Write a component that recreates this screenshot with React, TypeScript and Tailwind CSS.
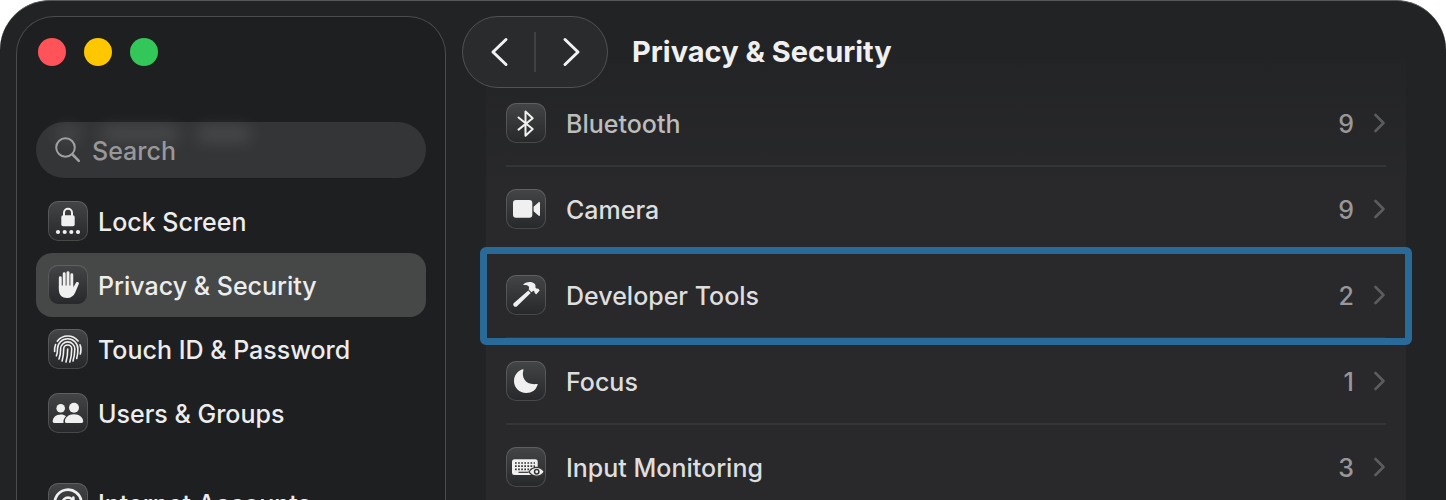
import { useState, type ReactNode } from "react";
import { AtSign } from "lucide-react";

interface SidebarItem {
  id: string;
  label: string;
  icon: ReactNode;
}

interface PermissionItem extends SidebarItem {
  count: number;
}

function Glyph({ children }: { children: ReactNode }) {
  return (
    <svg viewBox="0 0 40 40" className="size-10" fill="currentColor" aria-hidden="true">
      {children}
    </svg>
  );
}

const LockGlyph = (
  <Glyph>
    <path d="M16 15v-3.2a4 4 0 0 1 8 0V15" fill="none" stroke="currentColor" strokeWidth="2" />
    <rect x="13.3" y="14.2" width="13.4" height="11" rx="1.8" />
    <circle cx="10" cy="31" r="2.1" />
    <circle cx="16.7" cy="31" r="2.1" />
    <circle cx="23.3" cy="31" r="2.1" />
    <circle cx="30" cy="31" r="2.1" />
  </Glyph>
);

const HandGlyph = (
  <Glyph>
    <path
      d="M12.3 12.8V24M16.2 8.8V22M20 7.6V22M23.8 9.8V22"
      fill="none"
      stroke="currentColor"
      strokeWidth="2.9"
      strokeLinecap="round"
    />
    <path d="M10.9 20.5V25c0 5 3.4 8 8.1 8 4 0 6.5-1.9 8.2-5.5l3.6-8.4c.4-1.1-.2-1.9-1.1-2.1-1-.1-1.7.4-2.1 1.3l-2.3 4.2v-2z" />
  </Glyph>
);

const FingerprintGlyph = (
  <Glyph>
    <g fill="none" stroke="currentColor" strokeWidth="1.6" strokeLinecap="round">
      <path d="M9.3 12.2a13.2 13.2 0 0 1 20.8-.2" />
      <path d="M32 15.8c1.2 2.8 1.2 6.2.3 9.2M6.6 22.5c-.1-2.8.2-5 1-7" />
      <path d="M8.4 26.8c.8-2 1.1-4.3 1.1-6.8a10.2 10.2 0 0 1 20.4 0c0 3.5-.3 6.5-1.2 9.5" />
      <path d="M11 30c1.2-3 1.6-6.5 1.6-10a7.1 7.1 0 0 1 14.2 0c0 4.5-.6 8.3-1.8 12" />
      <path d="M14.1 32c1.2-4 1.6-8 1.6-12a4 4 0 0 1 8 0c0 5-.6 9-1.9 13" />
      <path d="M19.7 20c0 5-.5 9-1.7 13" />
    </g>
  </Glyph>
);

const UsersGlyph = (
  <Glyph>
    <circle cx="12.7" cy="15.3" r="4.3" />
    <circle cx="26" cy="14.8" r="5" />
    <path d="M4.7 28.6c0-3.7 3-7 8-7 2.3 0 4 .6 5.3 1.7-1.7 1.7-2.6 3.6-2.6 5.5 0 .5.1.9.3 1.2H6.2c-1 0-1.5-.5-1.5-1.4z" />
    <path d="M16.9 28.6c0-3.9 3.5-7.3 9.1-7.3s9.2 3.4 9.2 7.3c0 .9-.6 1.4-1.7 1.4h-15c-1.1 0-1.6-.5-1.6-1.4z" />
  </Glyph>
);

const BluetoothGlyph = (
  <Glyph>
    <path
      d="M12.5 14.5L26.7 26l-7.2 6.8V8.4l7.2 6.8L12.5 26.6"
      fill="none"
      stroke="currentColor"
      strokeWidth="2"
      strokeLinecap="round"
      strokeLinejoin="round"
    />
  </Glyph>
);

const CameraGlyph = (
  <Glyph>
    <rect x="7" y="11" width="19.3" height="17.8" rx="3" />
    <path d="M27.6 17.8l4.8-4.3c.9-.8 1.6-.5 1.6.6v11.8c0 1.1-.7 1.4-1.6.6l-4.8-4.3z" />
  </Glyph>
);

const HammerGlyph = (
  <Glyph>
    <path d="M22.3 15.4l2.4 2.5L11 31.2c-.8.8-2.1.8-3 0-1-.9-1-2.3-.1-3.1z" />
    <path d="M17.5 9.3C20.4 6.5 25 6.2 28 8.3c1.1.8 1.6 1.8 1.5 3l-.1 1.3 1.4 1.1 1.3-.2 1.3 1.4c.3.3.2.6 0 .9L30.6 19c-.3.3-.6.3-.9 0l-1.1-1.2-.2-1.2-1-.8-2 1.4-2.8-3c1.7-2.3-.7-4.6-4.9-4.2-.4 0-.5-.4-.2-.7z" />
  </Glyph>
);

const MoonGlyph = (
  <Glyph>
    <path d="M16.6 8.3c.6-.2 1 .3.8.9-2.2 6.8 1.9 15.2 13.3 13.8.7-.1 1.2.3.9.9A12.2 12.2 0 0 1 20.2 32C13.3 32 8 26.8 8 20c0-5.4 3.5-9.9 8.6-11.7z" />
  </Glyph>
);

const KeyboardGlyph = (
  <Glyph>
    <rect x="6" y="12.3" width="25.7" height="15.7" rx="2.5" />
    <g fill="none" stroke="#343536" strokeWidth="1.7">
      <path d="M9 16h20M9 19.2h20M9 22.4h20" strokeDasharray="1.7 1.4" />
      <path d="M12.5 25.3h10" strokeWidth="1.2" />
    </g>
    <path
      d="M23 24.8c2-3 4.7-4.4 7.7-4.4s5.7 1.4 7.5 4.4c-1.8 3-4.5 4.4-7.5 4.4s-5.7-1.4-7.7-4.4z"
      stroke="#343536"
      strokeWidth="1.2"
    />
    <circle cx="30.7" cy="24.8" r="2.2" fill="none" stroke="#343536" strokeWidth="1.5" />
  </Glyph>
);

const SIDEBAR_ITEMS: SidebarItem[] = [
  { id: "lock", label: "Lock Screen", icon: LockGlyph },
  { id: "privacy", label: "Privacy & Security", icon: HandGlyph },
  { id: "touch", label: "Touch ID & Password", icon: FingerprintGlyph },
  { id: "users", label: "Users & Groups", icon: UsersGlyph },
];

const ACCOUNT_ITEMS: SidebarItem[] = [
  { id: "internet", label: "Internet Accounts", icon: <AtSign className="size-8" /> },
];

const PERMISSIONS: PermissionItem[] = [
  { id: "bluetooth", label: "Bluetooth", count: 9, icon: BluetoothGlyph },
  { id: "camera", label: "Camera", count: 9, icon: CameraGlyph },
  { id: "devtools", label: "Developer Tools", count: 2, icon: HammerGlyph },
  { id: "focus", label: "Focus", count: 1, icon: MoonGlyph },
  { id: "input", label: "Input Monitoring", count: 3, icon: KeyboardGlyph },
];

function IconTile({ children }: { children: ReactNode }) {
  return (
    <span className="flex size-10 shrink-0 items-center justify-center rounded-[10px] bg-linear-to-b from-[#444546] to-[#272829] text-[#f0f0f0] inset-ring inset-ring-white/15">
      {children}
    </span>
  );
}

interface SidebarRowProps {
  item: SidebarItem;
  selected: boolean;
  onSelect: () => void;
}

function SidebarRow({ item, selected, onSelect }: SidebarRowProps) {
  return (
    <li>
      <button
        onClick={onSelect}
        aria-current={selected ? "page" : undefined}
        className={`flex h-16 w-full items-center gap-2.5 rounded-2xl px-3 text-left text-[25px] font-medium whitespace-nowrap text-[#ededed] ${
          selected ? "bg-[#464847]" : ""
        }`}
      >
        <IconTile>{item.icon}</IconTile>
        <span className="pt-[3px]">{item.label}</span>
      </button>
    </li>
  );
}

function PermissionRow({ item, highlighted, faded }: { item: PermissionItem; highlighted: boolean; faded: boolean }) {
  return (
    <li className="relative px-5">
      <button
        className={`flex h-[86px] w-full items-center gap-5 border-b-2 border-[#343536] text-left text-[25px] font-medium ${
          faded ? "text-[#bdbdbd]" : "text-[#dededf]"
        }`}
      >
        <IconTile>{item.icon}</IconTile>
        <span className="flex-1 pt-[3px]">{item.label}</span>
        <span className="pt-[3px] text-[#98989a]">{item.count}</span>
        <svg viewBox="0 0 12 20" className="h-5 w-3 text-[#5c5c5e]" fill="none" stroke="currentColor" aria-hidden="true">
          <path d="M1.5 2l8 8-8 8" strokeWidth="2.6" strokeLinecap="round" strokeLinejoin="round" />
        </svg>
      </button>
      {highlighted && (
        <span className="pointer-events-none absolute -inset-x-1.5 -inset-y-1.5 z-10 rounded-md border-7 border-[#2a6a98]" />
      )}
    </li>
  );
}

export default function App() {
  const [active, setActive] = useState("privacy");
  const [query, setQuery] = useState("");

  return (
    <div className="bg-white font-['Inter','Liberation_Sans',sans-serif]">
      <div className="flex h-screen overflow-hidden rounded-t-[50px] border-t border-[#55585a] bg-[#222325]">
        <aside className="mt-[15px] ml-4 w-[430px] shrink-0 rounded-t-[38px] border border-b-0 border-[#4b4c4e] bg-[#1e1f21] px-[19px] pt-[21px]">
          <div className="flex gap-[18px] pl-0.5">
            <button aria-label="Close" className="size-7 rounded-full bg-[#ff5359]" />
            <button aria-label="Minimize" className="size-7 rounded-full bg-[#fec700]" />
            <button aria-label="Zoom" className="size-7 rounded-full bg-[#33c759]" />
          </div>

          <div className="relative mt-14 flex h-14 items-center rounded-full bg-[#343537] pl-[18px]">
            <span className="absolute top-1 left-5 h-4 w-6 rounded-full bg-white/10 blur-sm" />
            <span className="absolute top-1 left-16 h-4 w-20 rounded-full bg-white/10 blur-sm" />
            <span className="absolute top-1 left-40 h-4 w-14 rounded-full bg-white/10 blur-sm" />
            <svg viewBox="0 0 28 28" className="relative size-7 text-[#a0a0a1]" fill="none" stroke="currentColor" aria-hidden="true">
              <circle cx="11.5" cy="11.5" r="9.3" strokeWidth="2" />
              <path d="M18.5 18.5l6.3 6.3" strokeWidth="2.6" strokeLinecap="round" />
            </svg>
            <input
              type="text"
              aria-label="Search"
              placeholder="Search"
              value={query}
              onChange={(e) => setQuery(e.target.value)}
              className="relative ml-2.5 min-w-0 flex-1 bg-transparent pt-[3px] text-[25px] font-medium text-[#ededed] outline-none placeholder:text-[#98989a]"
            />
          </div>

          <nav className="mt-[11px]">
            <ul>
              {SIDEBAR_ITEMS.map((item) => (
                <SidebarRow key={item.id} item={item} selected={active === item.id} onSelect={() => setActive(item.id)} />
              ))}
            </ul>
            <ul className="mt-[26px]">
              {ACCOUNT_ITEMS.map((item) => (
                <SidebarRow key={item.id} item={item} selected={active === item.id} onSelect={() => setActive(item.id)} />
              ))}
            </ul>
          </nav>
        </aside>

        <main className="min-w-0 flex-1 pt-[15px]">
          <header className="relative z-10 flex items-center gap-6 pl-4">
            <div className="flex h-18 w-[146px] items-center rounded-full border border-[#515254] bg-[#2a2b2c] text-[#f2f2f2]">
              <button aria-label="Back" className="flex h-full flex-1 items-center justify-center">
                <svg viewBox="0 0 20 32" className="h-8 w-5" fill="none" stroke="currentColor" aria-hidden="true">
                  <path d="M17 3.5L4 16l13 12.5" strokeWidth="3" strokeLinecap="round" strokeLinejoin="round" />
                </svg>
              </button>
              <span className="h-10 w-0.5 bg-[#404142]" />
              <button aria-label="Forward" className="flex h-full flex-1 items-center justify-center">
                <svg viewBox="0 0 20 32" className="h-8 w-5" fill="none" stroke="currentColor" aria-hidden="true">
                  <path d="M3 3.5L16 16 3 28.5" strokeWidth="3" strokeLinecap="round" strokeLinejoin="round" />
                </svg>
              </button>
            </div>
            <h1 className="text-[29px] font-bold text-[#f0f0f0]">Privacy &amp; Security</h1>
          </header>

          <section className="-mt-7 mr-10 ml-10 bg-linear-to-b from-[#232426] to-[#29292b] to-30% pt-[21px]">
            <ul>
              {PERMISSIONS.map((item, i) => (
                <PermissionRow key={item.id} item={item} highlighted={item.id === "devtools"} faded={i === 0} />
              ))}
            </ul>
          </section>
        </main>
      </div>
    </div>
  );
}
